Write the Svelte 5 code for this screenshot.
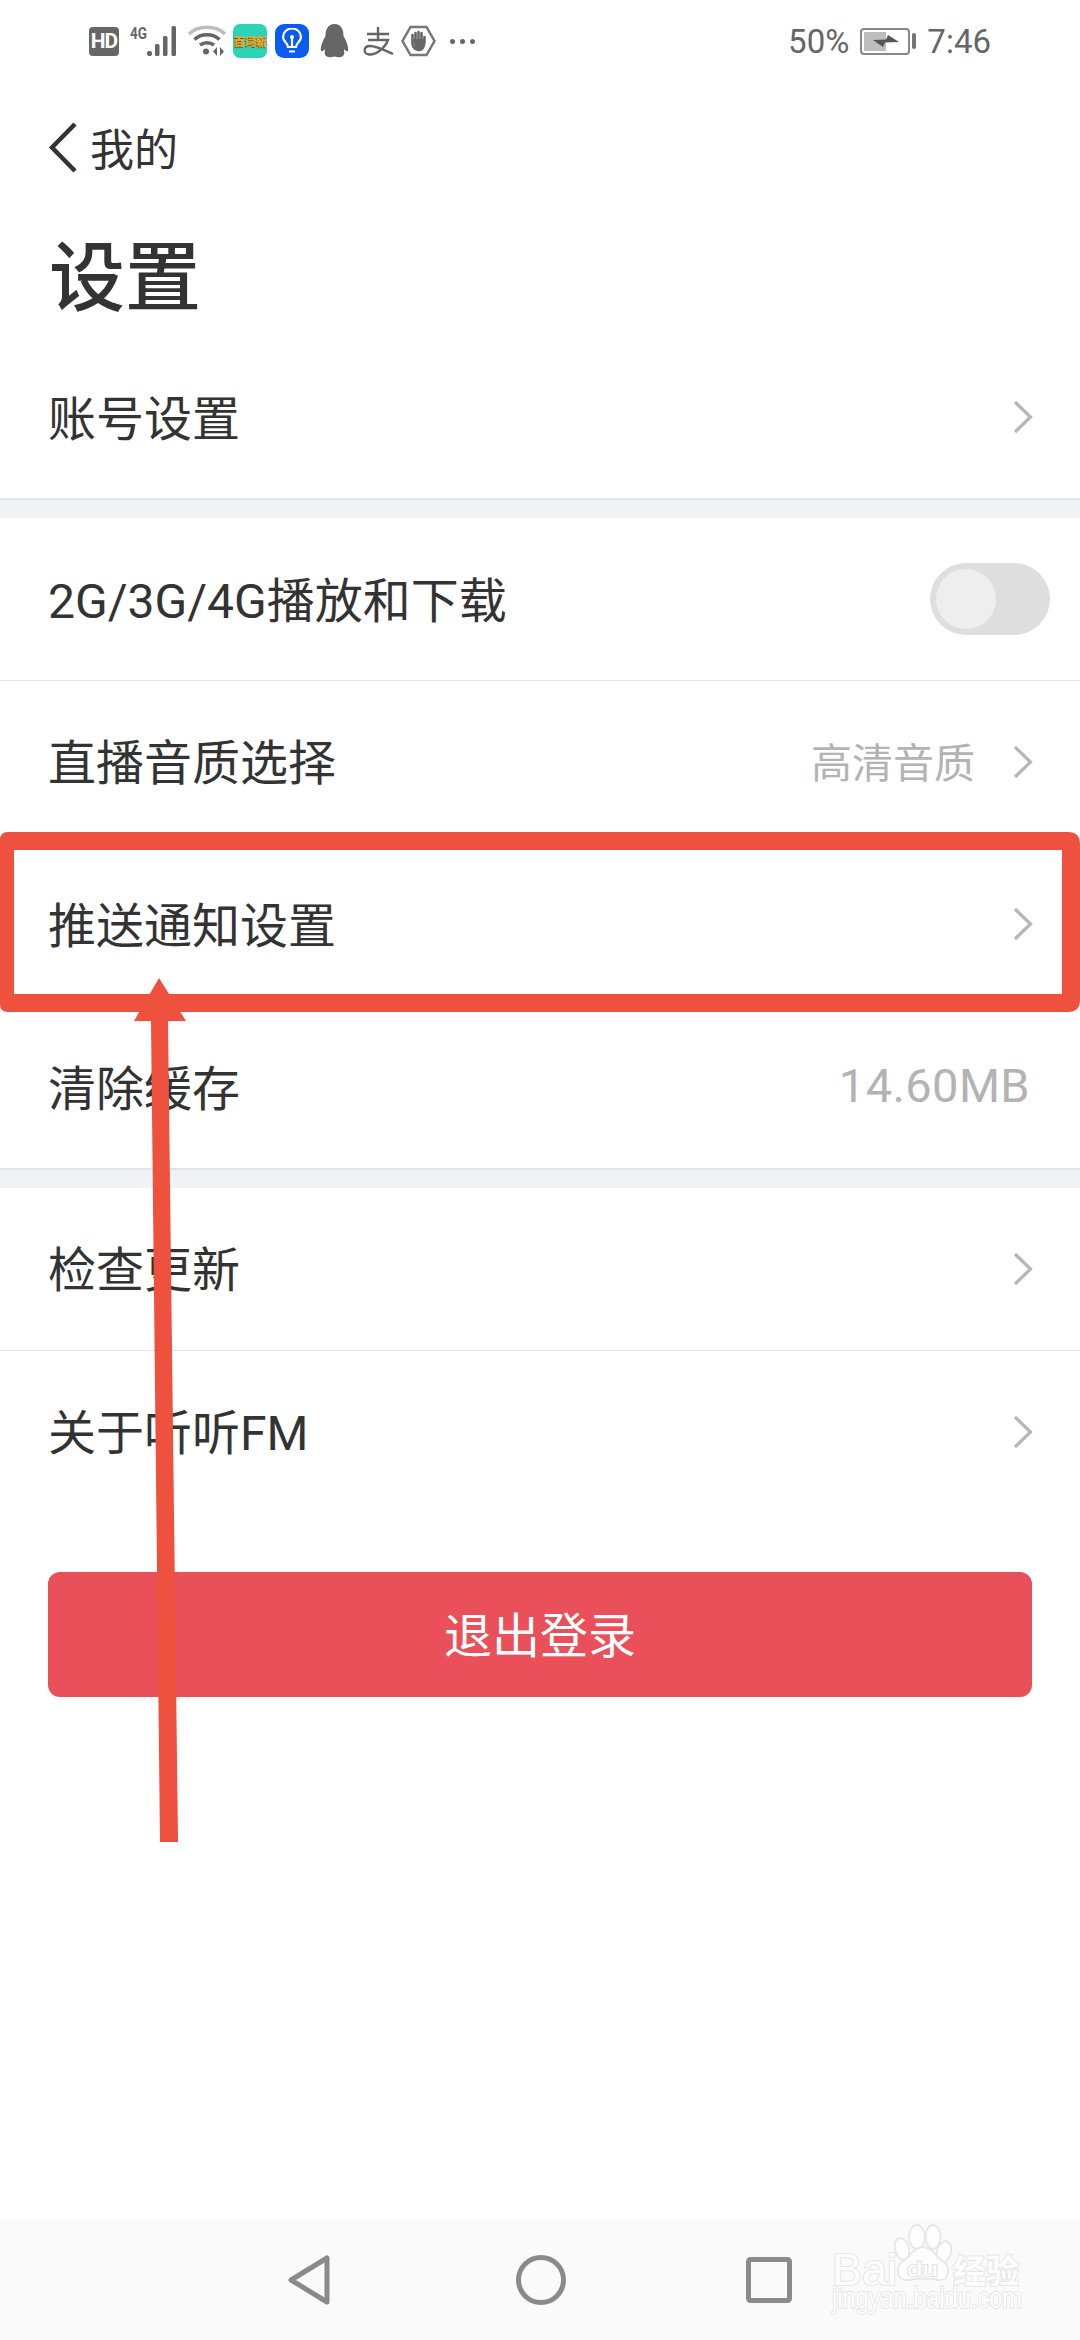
<script lang="ts">
  const sectionA = [{ label: '账号设置', arrow: true }];
  const sectionB = [
    { label: '2G/3G/4G播放和下载', toggle: true },
    { label: '直播音质选择', value: '高清音质', arrow: true },
    { label: '推送通知设置', arrow: true },
    { label: '清除缓存', value: '14.60MB', latin: true }
  ];
  const sectionC = [
    { label: '检查更新', arrow: true },
    { label: '关于听听FM', arrow: true }
  ];
  const sections = [sectionA, sectionB, sectionC];
</script>

{#snippet chevron()}
  <svg class="chevron" width="20" height="34" viewBox="0 0 20 34">
    <path d="M2 2 L17.5 17 L2 32" fill="none" stroke="#b6b6b6" stroke-width="3.2" />
  </svg>
{/snippet}

<div class="page">
  <div class="statusbar">
    <div class="status-left">
      <span class="hd">HD</span>
      <svg class="signal" width="50" height="32" viewBox="0 0 50 32">
        <text x="0" y="14" font-size="16" font-weight="700" fill="#666" font-family="Roboto, sans-serif" textLength="17" lengthAdjust="spacingAndGlyphs">4G</text>
        <rect x="17" y="26" width="5" height="5" rx="2" fill="#666" />
        <rect x="25" y="19" width="4.5" height="12" rx="1.5" fill="#666" />
        <rect x="33" y="11" width="4.5" height="20" rx="1.5" fill="#666" />
        <rect x="41.5" y="1" width="4.5" height="30" rx="1.5" fill="#666" />
      </svg>
      <svg class="wifi" width="38" height="32" viewBox="0 0 38 32">
        <path d="M1 9 C10 0 28 0 37 9" fill="none" stroke="#bdbdbd" stroke-width="3.5" />
        <path d="M6.5 14.5 C13 8 25 8 31.5 14.5" fill="none" stroke="#666" stroke-width="3.5" />
        <path d="M12 20 C16 17 22 17 26 20" fill="none" stroke="#666" stroke-width="3.5" />
        <circle cx="18" cy="26.5" r="3" fill="#666" />
        <path d="M29 22 V31 L25 26.5 Z M32 22 V31 L36 26.5 Z" fill="#666" />
      </svg>
      <span class="app-teal"><span>百词斩</span></span>
      <span class="app-blue">
        <svg width="22" height="26" viewBox="0 0 22 26">
          <path d="M7 19 C7 15 2 14 2 9 A9 8.5 0 0 1 20 9 C20 14 15 15 15 19 Z" fill="none" stroke="#fff" stroke-width="2.2" />
          <circle cx="11" cy="9" r="2" fill="#fff" />
          <path d="M11 19 V10 M8 23.5 H14" fill="none" stroke="#fff" stroke-width="2.2" />
        </svg>
      </span>
      <svg class="qq" width="29" height="34" viewBox="0 0 29 34">
        <path d="M14.5 0 C22 0 23.5 7 23.5 12 C26 16 29 23 28 27 C26.5 28 25 26 24 25 C24 28 25 30 23 32 C20 34 17 33 14.5 32.5 C12 33 9 34 6 32 C4 30 5 28 5 25 C4 26 2.5 28 1 27 C0 23 3 16 5.5 12 C5.5 7 7 0 14.5 0 Z" fill="#666" />
      </svg>
      <svg class="alipay" width="32" height="30" viewBox="0 0 32 30">
        <path d="M5 8 H27 M16 1 V14 M6 14 H26 C23 22 14 29 7 28.5 C1 28 1 20 8 20 C15 20 24 25 31 28" fill="none" stroke="#666" stroke-width="2.4" />
      </svg>
      <svg class="stop" width="35" height="32" viewBox="0 0 35 32">
        <path d="M9.5 2 H25.5 L33.5 16 L25.5 30 H9.5 L1.500 16 Z" fill="none" stroke="#777" stroke-width="2.5" />
        <path d="M11.5 15 V10 M14.5 14 V8 M17.5 14 V7 M20.5 14 V8 M23.5 17 V12 M11.5 14 V19 C12 23 15 25 18 25 C21 25 23 22 23.5 17" fill="none" stroke="#666" stroke-width="2.6" stroke-linecap="round" />
        <path d="M12 14 H23 V21 L19 24.5 L14 23.5 Z" fill="#666" />
      </svg>
      <span class="dots"><i></i><i></i><i></i></span>
    </div>
    <div class="status-right">
      <span>50%</span>
      <span class="battery">
        <span class="battery-body">
          <span class="battery-fill"></span>
          <svg class="bolt" width="26" height="12" viewBox="0 0 26 12">
            <path d="M0 5 L13 4.5 L15 0 L26 7 L12 7.5 L10 12 Z" fill="#555" />
          </svg>
        </span>
        <span class="battery-nub"></span>
      </span>
      <span>7:46</span>
    </div>
  </div>

  <header class="header">
    <div class="back">
      <svg width="30" height="54" viewBox="0 0 30 54">
        <path d="M27 3 L4 26.5 L27 50" fill="none" stroke="#333" stroke-width="4.5" />
      </svg>
      <span>我的</span>
    </div>
    <h1>设置</h1>
  </header>

  {#each sections as rows}
    <section class="section">
      {#each rows as row}
        <div class="row">
          <span class="label">{row.label}</span>
          {#if row.value}
            <span class="value" class:latin={row.latin}>{row.value}</span>
          {/if}
          {#if row.arrow}
            {@render chevron()}
          {/if}
          {#if row.toggle}
            <span class="toggle"><span class="knob"></span></span>
          {/if}
        </div>
      {/each}
    </section>
  {/each}

  <button class="logout">退出登录</button>

  <nav class="navbar">
    <svg width="42" height="50" viewBox="0 0 42 50">
      <path d="M39 3 V47 L3 25 Z" fill="none" stroke="#8a8a8a" stroke-width="5" stroke-linejoin="round" />
    </svg>
    <svg width="50" height="50" viewBox="0 0 50 50">
      <circle cx="25" cy="25" r="22.5" fill="none" stroke="#8a8a8a" stroke-width="5" />
    </svg>
    <svg class="nav-recent" width="46" height="46" viewBox="0 0 46 46">
      <rect x="2.5" y="2.5" width="41" height="41" rx="2" fill="none" stroke="#8a8a8a" stroke-width="5" />
    </svg>
  </nav>

  <!-- annotation drawn over the screenshot -->
  <svg class="annotation" width="1080" height="2340" viewBox="0 0 1080 2340">
    <path fill-rule="evenodd" fill="#ee513d"
      d="M8 832 H1068 Q1080 832 1080 844 V1000 Q1080 1012 1068 1012 H8 Q0 1012 0 1004 V840 Q0 832 8 832 Z M14 850 V994 H1062 V850 Z" />
    <path fill="#ee513d" d="M159 978 L186 1021 H168 L178 1842 H160 L151 1021 H134 Z" />
  </svg>

  <svg class="watermark" width="210" height="110" viewBox="0 0 210 110">
    <g class="wm-shape">
      <ellipse cx="97" cy="17" rx="8" ry="12" />
      <ellipse cx="113" cy="17" rx="7.5" ry="12" />
      <ellipse cx="82" cy="29" rx="7" ry="11" transform="rotate(-15 82 29)" />
      <ellipse cx="124" cy="32" rx="7" ry="11" transform="rotate(15 124 32)" />
      <path d="M103 27 C112 27 116 37 124 42 C132 48 128 62 118 60 C108 58 98 58 88 60 C78 62 74 48 82 42 C90 37 94 27 103 27 Z" />
    </g>
    <g class="wm-text">
      <text x="12" y="65" font-size="45">Bai</text>
      <text x="87" y="56" font-size="20" textLength="31" lengthAdjust="spacingAndGlyphs">du</text>
      <text class="wm-cn" x="133" y="63" font-size="33">经验</text>
      <text x="12" y="88" font-size="29" textLength="190" lengthAdjust="spacingAndGlyphs">jingyan.baidu.com</text>
    </g>
  </svg>
</div>

<style>
  :global(body) {
    margin: 0;
    background: #fff;
  }

  .page {
    position: relative;
    width: 1080px;
    height: 2340px;
    overflow: hidden;
    display: flex;
    flex-direction: column;
    background: #fff;
    color: #333;
    font-family: Roboto, "Noto Sans CJK SC", sans-serif;
  }

  .statusbar {
    height: 82px;
    flex: none;
    display: flex;
    align-items: center;
    justify-content: space-between;
    padding: 0 89px 0 89px;
    color: #666;
    font-size: 33px;
  }
  .status-left, .status-right {
    display: flex;
    align-items: center;
  }
  .hd {
    width: 30px;
    height: 29px;
    border-radius: 4px;
    background: #666;
    color: #fff;
    font-size: 21px;
    font-weight: 700;
    line-height: 29px;
    text-align: center;
    letter-spacing: -1px;
  }
  .signal { margin-left: 11px; }
  .wifi { margin-left: 8px; }
  .app-teal {
    margin-left: 7px;
    width: 34px;
    height: 34px;
    border-radius: 7px;
    background: #2cd3b8;
    display: flex;
    align-items: center;
    justify-content: center;
    overflow: hidden;
  }
  .app-teal span {
    font-size: 11px;
    font-weight: 900;
    color: #f5a623;
    text-shadow: 0 1px 0 #7a4a10;
    white-space: nowrap;
  }
  .app-blue {
    margin-left: 8px;
    width: 34px;
    height: 34px;
    border-radius: 9px;
    background: #0a5cf0;
    display: flex;
    align-items: center;
    justify-content: center;
  }
  .qq { margin-left: 11px; }
  .alipay { margin-left: 13px; }
  .stop { margin-left: 7px; }
  .dots {
    margin-left: 14px;
    display: flex;
    gap: 5px;
  }
  .dots i {
    width: 5px;
    height: 5px;
    border-radius: 50%;
    background: #666;
  }
  .status-right { gap: 11px; }
  .battery {
    display: flex;
    align-items: center;
    gap: 2px;
  }
  .battery-body {
    position: relative;
    width: 50px;
    height: 27px;
    box-sizing: border-box;
    border: 2px solid #888;
    border-radius: 4px;
    display: block;
  }
  .battery-fill {
    position: absolute;
    left: 2px;
    top: 2px;
    bottom: 2px;
    width: 22px;
    background: #bdbdbd;
  }
  .bolt {
    position: absolute;
    left: 11px;
    top: 5px;
  }
  .battery-nub {
    width: 4px;
    height: 16px;
    border-radius: 2px;
    background: #777;
  }

  .header {
    flex: none;
    height: 254px;
    padding-left: 48px;
    display: flex;
    flex-direction: column;
  }
  .back {
    margin-top: 37px;
    height: 58px;
    display: flex;
    align-items: center;
    gap: 12px;
    font-size: 44px;
  }
  .back span { margin-bottom: 2px; }
  h1 {
    margin: 57px 0 0 1px;
    font-size: 76px;
    line-height: 90px;
    font-weight: 500;
    color: #333;
  }

  .section {
    flex: none;
    border-bottom: 2px solid #e2e4e6;
  }
  .section + .section {
    border-top: 18px solid #f0f3f6;
  }
  .section:last-of-type {
    border-bottom: none;
  }
  .row {
    height: 162px;
    box-sizing: border-box;
    display: flex;
    align-items: center;
    padding: 0 48px;
    font-size: 48px;
  }
  .row + .row {
    border-top: 1px solid #e2e4e6;
    height: 162.67px;
  }
  .label {
    flex: 1;
    margin-left: 0;
    margin-bottom: 5px;
    color: #333;
    white-space: nowrap;
  }
  .value {
    color: #b3b3b3;
    font-size: 41px;
    margin-right: 38px;
    margin-bottom: 4px;
  }
  .value.latin {
    font-size: 47px;
    margin-right: 2px;
    letter-spacing: 0.4px;
  }
  .chevron {
    margin-right: -1px;
    flex: none;
  }
  .toggle {
    margin-right: -18px;
    width: 120px;
    height: 72px;
    border-radius: 36px;
    background: #dedede;
    display: flex;
    align-items: center;
    padding-left: 6px;
    box-sizing: border-box;
  }
  .knob {
    width: 60px;
    height: 60px;
    border-radius: 50%;
    background: #eee;
  }

  .logout {
    flex: none;
    margin: 59px 48px 0;
    height: 125px;
    padding: 0 0 4px;
    border: none;
    border-radius: 12px;
    background: #ea505a;
    color: #fff;
    font: inherit;
    font-size: 48px;
  }

  .navbar {
    margin-top: auto;
    flex: none;
    height: 120px;
    background: #fafafa;
    display: flex;
    align-items: center;
    padding-left: 288px;
    gap: 186px;
  }
  .nav-recent { margin-left: -6px; }

  .annotation {
    position: absolute;
    left: 0;
    top: 0;
    pointer-events: none;
  }

  .watermark {
    position: absolute;
    left: 820px;
    top: 2220px;
  }
  .wm-shape {
    fill: #fdfdfd;
    stroke: #e6e6e6;
    stroke-width: 1.8;
  }
  .wm-text text {
    font-family: "Liberation Sans", sans-serif;
    fill: #fdfdfd;
    stroke: #e6e6e6;
    stroke-width: 2;
    paint-order: stroke fill;
  }
  .wm-text .wm-cn {
    font-family: "Noto Sans CJK SC", sans-serif;
    font-weight: 700;
  }
</style>
